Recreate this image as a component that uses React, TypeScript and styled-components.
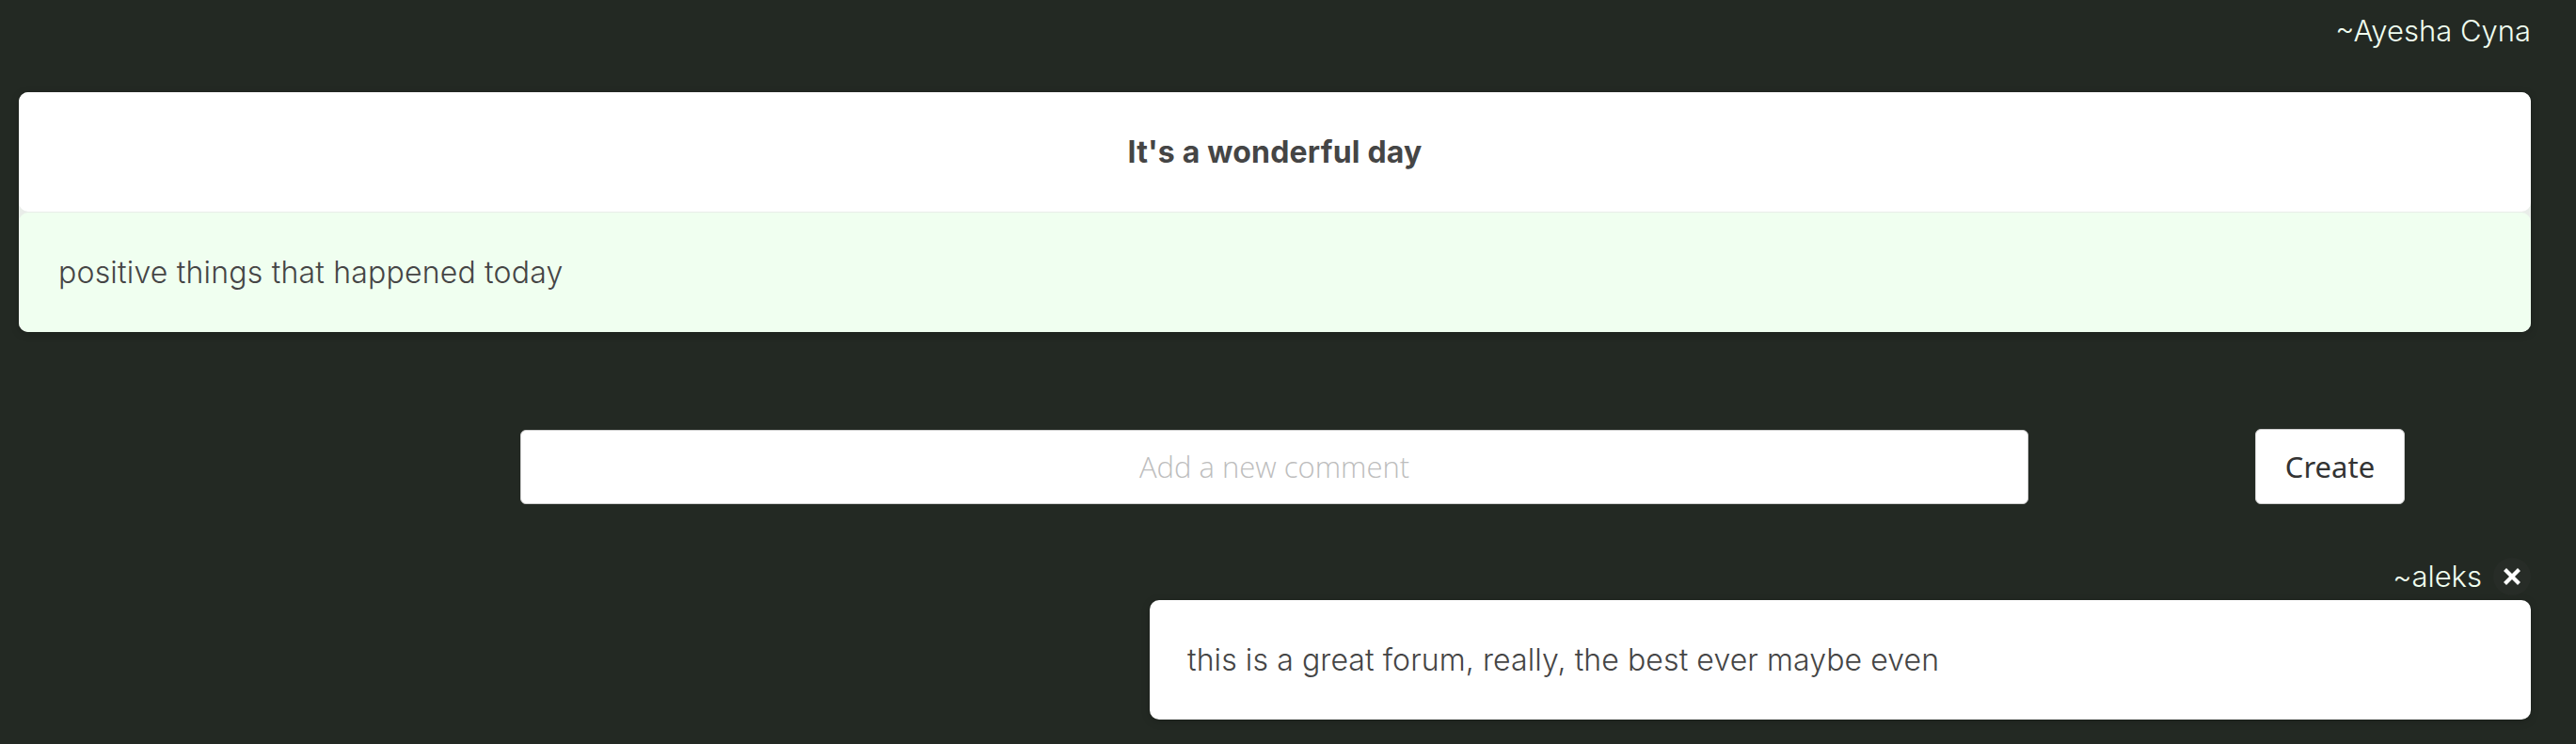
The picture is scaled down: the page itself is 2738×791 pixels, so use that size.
import { FC } from "react";
import styled, { createGlobalStyle } from "styled-components";

const GlobalStyle = createGlobalStyle`
  html, body {
    margin: 0;
    padding: 0;
    background: #232923;
  }
  body {
    font-family: Inter, "Liberation Sans", sans-serif;
  }
`;

const Page = styled.div`
  display: flex;
  flex-direction: column;
  padding: 13px 48px 0 20px;
  min-height: 791px;
  box-sizing: border-box;
`;

const Author = styled.div`
  display: flex;
  justify-content: flex-end;
  align-items: center;
  gap: 12px;
  font-family: Inter, "Liberation Sans", sans-serif;
  font-weight: 300;
  font-size: 31px;
  line-height: 40px;
  color: #f0fff0;
`;

const Post = styled.div`
  display: flex;
  flex-direction: column;
  gap: 1px;
  margin-top: 45px;
  border-radius: 10px;
  background: #e9ede9;
  box-shadow: 0 2px 10px rgba(0, 0, 0, 0.18);
`;

const Card = styled.div<{ $tone?: "white" | "green"; $bold?: boolean }>`
  display: flex;
  align-items: center;
  justify-content: ${({ $bold }) => ($bold ? "center" : "flex-start")};
  height: 127px;
  padding: 0 42px;
  box-sizing: border-box;
  border-radius: 10px;
  background: ${({ $tone }) => ($tone === "green" ? "#f0fff0" : "#ffffff")};
  color: #454545;
  font-family: Inter, "Liberation Sans", sans-serif;
  font-size: 32px;
  letter-spacing: 0.2px;
  font-weight: ${({ $bold }) => ($bold ? 700 : 300)};
`;

const CommentForm = styled.form`
  display: flex;
  align-items: center;
  gap: 241px;
  padding-left: 533px;
  margin-top: 103px;
`;

const CommentInput = styled.input`
  width: 1603px;
  height: 79px;
  box-sizing: border-box;
  border: 1px solid #cfcfcf;
  border-radius: 6px;
  background: #fff;
  text-align: center;
  font-family: "Open Sans", "Noto Sans", sans-serif;
  font-weight: 300;
  font-size: 31px;
  color: #333;
  outline: none;
  &::placeholder {
    color: #bdbdbd;
  }
`;

const CreateButton = styled.button`
  width: 159px;
  height: 80px;
  box-sizing: border-box;
  border: 1px solid #cfcfcf;
  border-radius: 6px;
  background: #fff;
  color: #333;
  font-family: "Noto Sans", "Open Sans", sans-serif;
  font-size: 31px;
  cursor: pointer;
`;

const Comment = styled.div`
  display: flex;
  flex-direction: column;
  align-items: flex-end;
  margin-top: 57px;
`;

const CommentCard = styled(Card)`
  width: 1468px;
  padding: 0 40px;
  margin-top: 5px;
  letter-spacing: 0.1px;
  box-shadow: 0 2px 10px rgba(0, 0, 0, 0.18);
`;

const DeleteButton = styled.button`
  display: flex;
  align-items: center;
  justify-content: center;
  width: 40px;
  height: 40px;
  padding: 0;
  border: none;
  border-radius: 50%;
  background: #272c27;
  cursor: pointer;
`;

const CloseIcon: FC = () => (
  <svg width="18" height="18" viewBox="0 0 18 18">
    <path
      d="M3 3 L15 15 M15 3 L3 15"
      stroke="#ffffff"
      strokeWidth="4.2"
      strokeLinecap="square"
    />
  </svg>
);

const App: FC = () => {
  return (
    <>
      <GlobalStyle />
      <Page>
        <Author>~Ayesha Cyna</Author>
        <Post>
          <Card $bold>It's a wonderful day</Card>
          <Card $tone="green">positive things that happened today</Card>
        </Post>
        <CommentForm onSubmit={(e) => e.preventDefault()}>
          <CommentInput placeholder="Add a new comment" />
          <CreateButton type="submit">Create</CreateButton>
        </CommentForm>
        <Comment>
          <Author>
            ~aleks
            <DeleteButton aria-label="delete comment">
              <CloseIcon />
            </DeleteButton>
          </Author>
          <CommentCard>this is a great forum, really, the best ever maybe even</CommentCard>
        </Comment>
      </Page>
    </>
  );
};

export default App;
